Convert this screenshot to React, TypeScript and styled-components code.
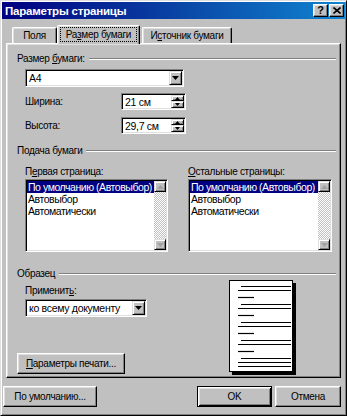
import React from 'react'
import styled, { createGlobalStyle } from 'styled-components'

const GlobalStyle = createGlobalStyle`
  html, body {
    margin: 0;
    padding: 0;
    background: #c0c0c0;
  }
  body {
    font-family: "Liberation Sans", Arial, sans-serif;
    font-size: 10px;
    letter-spacing: -0.3px;
    color: #000;
  }
  * {
    box-sizing: border-box;
  }
`

const Window = styled.div`
  width: 347px;
  height: 416px;
  padding: 1px;
  background: #c0c0c0;
  border: 1px solid;
  border-color: #dfdfdf #000 #000 #dfdfdf;
  box-shadow: inset 1px 1px #fff, inset -1px -1px #808080;
  display: flex;
  flex-direction: column;
`

const TitleBar = styled.div`
  height: 17px;
  padding: 0 1px 0 3px;
  display: flex;
  align-items: center;
  background: linear-gradient(90deg, #000080 0%, #0a4aa8 55%, #1084d0 100%);
`

const Title = styled.span`
  flex: 1;
  color: #fff;
  font-weight: bold;
  font-size: 11.5px;
  letter-spacing: -0.2px;
`

const CaptionButtons = styled.div`
  display: flex;
  gap: 1px;
`

const CaptionButton = styled.div`
  width: 15px;
  height: 13px;
  display: flex;
  align-items: center;
  justify-content: center;
  background: #c0c0c0;
  border: 1px solid;
  border-color: #fff #000 #000 #fff;
  box-shadow: inset -1px -1px #808080, inset 1px 1px #dfdfdf;
  font-weight: bold;
  font-size: 11px;
  line-height: 1;
`

const TabArea = styled.div`
  padding: 6px 4px 0 4px;
`

const TabStrip = styled.div`
  height: 18px;
  display: flex;
  align-items: flex-end;
`

const Tab = styled.div<{ $active?: boolean; $w: number; $ml?: number }>`
  position: relative;
  z-index: ${p => (p.$active ? 1 : 0)};
  width: ${p => p.$w}px;
  height: ${p => (p.$active ? 19 : 16)}px;
  margin-left: ${p => p.$ml ?? 0}px;
  margin-bottom: ${p => (p.$active ? -1 : 0)}px;
  display: flex;
  align-items: center;
  justify-content: center;
  padding-bottom: ${p => (p.$active ? 2 : 0)}px;
  background: #c0c0c0;
  border: 1px solid;
  border-bottom: none;
  border-color: #fff #000 #000 #fff;
  border-radius: 2px 2px 0 0;
  box-shadow: inset -1px 0 #808080, inset 1px 1px #dfdfdf;
`

const FocusLabel = styled.span`
  outline: 1px dotted #000;
  outline-offset: 1px;
  padding: 0 4px;
`

const Panel = styled.div`
  height: 335px;
  padding: 0 4px 0 10px;
  background: #c0c0c0;
  border: 1px solid;
  border-color: #fff #000 #000 #fff;
  box-shadow: inset -1px -1px #808080, inset 1px 1px #dfdfdf;
  display: flex;
  flex-direction: column;
`

const GroupHeader = styled.div<{ $mt: number }>`
  height: 12px;
  margin-top: ${p => p.$mt}px;
  display: flex;
  align-items: center;
  gap: 4px;
  line-height: 12px;
`

const GroupLine = styled.div`
  flex: 1;
  height: 2px;
  border-top: 1px solid #808080;
  border-bottom: 1px solid #fff;
`

const Label = styled.div`
  height: 12px;
  line-height: 12px;
  white-space: nowrap;
`

const Sunken = styled.div`
  background: #fff;
  border: 1px solid;
  border-color: #808080 #fff #fff #808080;
  box-shadow: inset 1px 1px #000, inset -1px -1px #dfdfdf;
  padding: 1px;
  display: flex;
`

const Combo = styled(Sunken)<{ $w: number; $mt: number }>`
  width: ${p => p.$w}px;
  height: 18px;
  margin: ${p => p.$mt}px 0 0 8px;
`

const FieldText = styled.div`
  flex: 1;
  padding-left: 2px;
  line-height: 14px;
  font-size: 10.5px;
  white-space: nowrap;
  overflow: hidden;
`

const SmallButton = styled.div<{ $h?: number }>`
  width: 13px;
  height: ${p => (p.$h ? `${p.$h}px` : 'auto')};
  display: flex;
  align-items: center;
  justify-content: center;
  background: #c0c0c0;
  border: 1px solid;
  border-color: #dfdfdf #000 #000 #dfdfdf;
  box-shadow: inset 1px 1px #fff, inset -1px -1px #808080;
`

const SpinButtons = styled.div`
  display: flex;
  flex-direction: column;
`

const FieldRow = styled.div<{ $mt: number }>`
  height: 17px;
  margin: ${p => p.$mt}px 0 0 8px;
  display: flex;
  align-items: center;
`

const RowLabel = styled(Label)`
  width: 96px;
`

const Spin = styled(Sunken)`
  width: 65px;
  height: 17px;
`

const ListsRow = styled.div`
  margin: 9px 0 0 8px;
  display: grid;
  grid-template-columns: 143px 144px;
  column-gap: 20px;
`

const ListColumn = styled.div`
  display: flex;
  flex-direction: column;
`

const ListBox = styled(Sunken)`
  height: 73px;
  margin-top: 1px;
`

const ListItems = styled.div`
  flex: 1;
  overflow: hidden;
`

const ListItem = styled.div<{ $selected?: boolean }>`
  height: 12px;
  line-height: 12px;
  padding-left: 1px;
  font-size: 10.5px;
  letter-spacing: -0.45px;
  white-space: nowrap;
  color: ${p => (p.$selected ? '#fff' : '#000')};
  background: ${p => (p.$selected ? '#000080' : 'transparent')};
`

const ScrollBar = styled.div`
  width: 12px;
  display: flex;
  flex-direction: column;
`

const ScrollTrack = styled.div`
  flex: 1;
  background: repeating-conic-gradient(#c0c0c0 0 25%, #fff 0 50%) 0 0 / 2px 2px;
`

const ScrollButton = styled(SmallButton)`
  width: 12px;
  height: 11px;
`

const SampleRow = styled.div`
  display: flex;
  justify-content: space-between;
`

const SampleLeft = styled.div`
  padding-top: 5px;
  display: flex;
  flex-direction: column;
  align-items: flex-start;
`

const IndentLabel = styled(Label)`
  margin-left: 8px;
`

const PushButton = styled.button<{ $w: number; $default?: boolean }>`
  width: ${p => p.$w}px;
  height: 21px;
  padding: 0;
  font-family: "Liberation Sans", Arial, sans-serif;
  font-size: 10px;
  letter-spacing: -0.3px;
  color: #000;
  background: #c0c0c0;
  border: 1px solid;
  border-color: ${p => (p.$default ? '#000' : '#fff #000 #000 #fff')};
  box-shadow: ${p =>
    p.$default
      ? 'inset 1px 1px #fff, inset -1px -1px #000, inset 2px 2px #dfdfdf, inset -2px -2px #808080'
      : 'inset -1px -1px #808080, inset 1px 1px #dfdfdf'};
  white-space: nowrap;
`

const PrintButton = styled(PushButton)`
  margin-top: 36px;
`

const Preview = styled.svg`
  margin-right: 40px;
  display: block;
`

const ButtonRow = styled.div`
  margin-top: 8px;
  padding: 0 4px 0 1px;
  display: flex;
  gap: 3px;
`

const Spacer = styled.div`
  flex: 1;
`

function DownArrow({ color = '#000' }: { color?: string }) {
  return (
    <svg width="7" height="4" viewBox="0 0 7 4">
      <path d="M0 0H7L3.5 4Z" fill={color} />
    </svg>
  )
}

function SpinArrow({ up }: { up?: boolean }) {
  return (
    <svg width="5" height="3" viewBox="0 0 5 3">
      <path d={up ? 'M2.5 0L5 3H0Z' : 'M0 0H5L2.5 3Z'} fill="#000" />
    </svg>
  )
}

function ScrollArrow({ up }: { up?: boolean }) {
  return (
    <svg width="7" height="4" viewBox="0 0 7 4">
      <path d={up ? 'M3.5 0L7 4H0Z' : 'M0 0H7L3.5 4Z'} fill="#a0a0a0" />
    </svg>
  )
}

function ComboBox({ value, width, mt }: { value: string; width: number; mt: number }) {
  return (
    <Combo $w={width} $mt={mt}>
      <FieldText>{value}</FieldText>
      <SmallButton>
        <DownArrow />
      </SmallButton>
    </Combo>
  )
}

function SpinBox({ value }: { value: string }) {
  return (
    <Spin>
      <FieldText>{value}</FieldText>
      <SpinButtons>
        <SmallButton $h={6}>
          <SpinArrow up />
        </SmallButton>
        <SmallButton $h={7}>
          <SpinArrow />
        </SmallButton>
      </SpinButtons>
    </Spin>
  )
}

const trays = ['По умолчанию (Автовыбор)', 'Автовыбор', 'Автоматически']

function TrayList() {
  return (
    <ListBox>
      <ListItems>
        {trays.map((t, i) => (
          <ListItem key={t} $selected={i === 0}>
            {t}
          </ListItem>
        ))}
      </ListItems>
      <ScrollBar>
        <ScrollButton>
          <ScrollArrow up />
        </ScrollButton>
        <ScrollTrack />
        <ScrollButton>
          <ScrollArrow />
        </ScrollButton>
      </ScrollBar>
    </ListBox>
  )
}

// page preview: each paragraph is an indented line, a full line and a short last line
const previewLines: { y: number; x1: number; x2: number }[] = []
for (let p = 0; p < 5; p++) {
  const top = 6 + p * 18
  previewLines.push({ y: top, x1: 12, x2: 62 })
  previewLines.push({ y: top + 4, x1: 9, x2: 62 })
  if (p < 4) previewLines.push({ y: top + 11, x1: 9, x2: 25 })
  else previewLines.push({ y: top + 8, x1: 9, x2: 62 })
}

function PagePreview() {
  return (
    <Preview width="67" height="95" viewBox="0 0 67 95">
      <rect x="3" y="3" width="64" height="92" fill="#000" />
      <rect x="0.5" y="0.5" width="63" height="91" fill="#fff" stroke="#000" />
      {previewLines.map((l, i) => (
        <line key={i} x1={l.x1} x2={l.x2} y1={l.y + 0.5} y2={l.y + 0.5} stroke="#000" strokeWidth="1.2" />
      ))}
    </Preview>
  )
}

export default function App() {
  return (
    <>
      <GlobalStyle />
      <Window>
        <TitleBar>
          <Title>Параметры страницы</Title>
          <CaptionButtons>
            <CaptionButton>?</CaptionButton>
            <CaptionButton>
              <svg width="8" height="7" viewBox="0 0 8 7">
                <path d="M0.5 0.5L7.5 6.5M7.5 0.5L0.5 6.5" stroke="#000" strokeWidth="1.6" />
              </svg>
            </CaptionButton>
          </CaptionButtons>
        </TitleBar>

        <TabArea>
          <TabStrip>
            <Tab $w={45} $ml={6}>Поля</Tab>
            <Tab $w={83} $active>
              <FocusLabel>
                Ра<u>з</u>мер бумаги
              </FocusLabel>
            </Tab>
            <Tab $w={90} $ml={2}>
              И<u>с</u>точник бумаги
            </Tab>
          </TabStrip>

          <Panel>
            <GroupHeader $mt={9}>
              <span>
                Размер <u>б</u>умаги:
              </span>
              <GroupLine />
            </GroupHeader>
            <ComboBox value="A4" width={159} mt={4} />
            <FieldRow $mt={6}>
              <RowLabel>Ширина:</RowLabel>
              <SpinBox value="21 см" />
            </FieldRow>
            <FieldRow $mt={7}>
              <RowLabel>Высота:</RowLabel>
              <SpinBox value="29,7 см" />
            </FieldRow>

            <GroupHeader $mt={11}>
              <span>Подача бумаги</span>
              <GroupLine />
            </GroupHeader>
            <ListsRow>
              <ListColumn>
                <Label>
                  П<u>е</u>рвая страница:
                </Label>
                <TrayList />
              </ListColumn>
              <ListColumn>
                <Label>
                  <u>О</u>стальные страницы:
                </Label>
                <TrayList />
              </ListColumn>
            </ListsRow>

            <GroupHeader $mt={16}>
              <span>Образец</span>
              <GroupLine />
            </GroupHeader>
            <SampleRow>
              <SampleLeft>
                <IndentLabel>
                  Применит<u>ь</u>:
                </IndentLabel>
                <ComboBox value="ко всему документу" width={122} mt={2} />
                <PrintButton $w={108}>
                  <u>П</u>араметры печати...
                </PrintButton>
              </SampleLeft>
              <PagePreview />
            </SampleRow>
          </Panel>
        </TabArea>

        <ButtonRow>
          <PushButton $w={94}>По умолчанию...</PushButton>
          <Spacer />
          <PushButton $w={75} $default>
            OK
          </PushButton>
          <PushButton $w={66}>Отмена</PushButton>
        </ButtonRow>
      </Window>
    </>
  )
}
